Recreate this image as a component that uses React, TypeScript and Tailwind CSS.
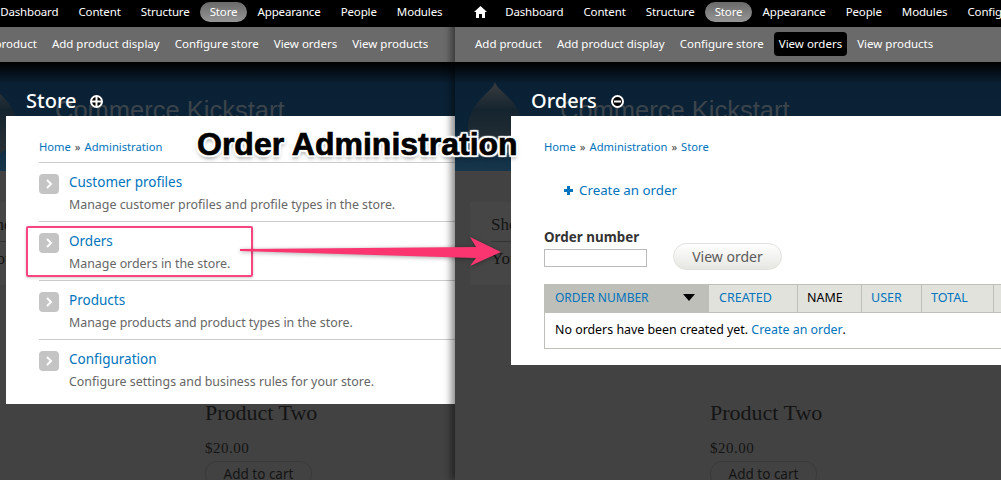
import React from "react";

const sans = "font-['Noto_Sans','DejaVu_Sans',sans-serif]";
const link = "text-[#0074bd]";

function Chevron() {
  return (
    <span className="flex h-5 w-5 shrink-0 items-center justify-center rounded-[4px] bg-[#c4c4c4]">
      <svg width="8" height="12" viewBox="0 0 8 12" fill="none">
        <path d="M2 2l4 4-4 4" stroke="#fff" strokeWidth="2" />
      </svg>
    </span>
  );
}

function Nav({ viewActive }: { viewActive?: boolean }) {
  const main = ["Dashboard", "Content", "Structure", "Store", "Appearance", "People", "Modules", "Configuration"];
  const sub = ["Add product", "Add product display", "Configure store", "View orders", "View products"];
  return (
    <>
      <div className="flex h-[27px] items-center gap-[0.15px] bg-black pb-[3px] pl-[19px] text-[11.5px] tracking-[-0.15px] text-white">
        <svg width="13" height="12" viewBox="0 0 13 12" fill="#fff" className="mr-[8px] shrink-0">
          <path d="M6.5 0L0 6h2v6h3V8h3v4h3V6h2z" />
        </svg>
        {main.map((m) => (
          <span
            key={m}
            className={
              m === "Store"
                ? "rounded-[10px] bg-gradient-to-b from-[#6a6a6a] to-[#969696] px-[10px] py-[2px] leading-[16px] whitespace-nowrap"
                : "px-[10px] whitespace-nowrap"
            }
          >
            {m}
          </span>
        ))}
      </div>
      <div className="flex h-[35px] items-center gap-[5px] bg-[#6a6a6a] pb-[1px] pl-[15px] text-[11.5px] text-white">
        {sub.map((s) => (
          <span
            key={s}
            className={
              viewActive && s === "View orders"
                ? "rounded-[4px] bg-black px-[5px] py-[4px] leading-[16px] whitespace-nowrap"
                : "px-[5px] py-[4px] leading-[16px] whitespace-nowrap"
            }
          >
            {s}
          </span>
        ))}
      </div>
    </>
  );
}

function Backdrop() {
  return (
    <>
      <div className="relative h-[109px] overflow-hidden bg-[linear-gradient(#000_0,#0a2135_22px,#0b2337_60%,#16364c_100%)]">
        <svg width="58" height="90" viewBox="0 0 58 90" className="absolute top-[20px] left-[11px]">
          <defs>
            <linearGradient id="drop" x1="0" y1="0" x2="0" y2="1">
              <stop offset="0" stopColor="#3a3c3f" />
              <stop offset="0.38" stopColor="#14242f" />
              <stop offset="1" stopColor="#2a3035" />
            </linearGradient>
          </defs>
          <path d="M29 0c2 10 27 18 27 46a27 27 0 0 1-54 0C2 20 27 10 29 0z" fill="url(#drop)" />
        </svg>
        <span className="absolute top-[33px] left-[105px] font-['Liberation_Sans',sans-serif] text-[25.5px] leading-[30px] whitespace-nowrap text-[#3c444b]">
          Commerce Kickstart
        </span>
      </div>
      <div className="flex h-[309px] bg-[#424242] font-['Liberation_Serif',serif] text-[#141414]">
        <div className="mt-[31px] ml-[15px] h-[83px] w-[100px] bg-[#464646] pt-[13px] pl-[21px] text-[17px]">
          <div className="border-b border-[#333] pb-[6px] leading-[20px]">Shopping</div>
          <div className="pt-[7px] leading-[20px]">Your</div>
        </div>
        <div className="ml-[140px] pt-[230px]">
          <div className="text-[22px] leading-[24px] whitespace-nowrap">Product Two</div>
          <div className="mt-[14px] text-[15px] leading-[18px] tracking-[0.5px]">$20.00</div>
          <div className={`mt-[4px] w-[107px] rounded-[12px] border border-[#3a3a3a] text-center text-[13.5px] leading-[24px] whitespace-nowrap ${sans}`}>
            Add to cart
          </div>
        </div>
      </div>
    </>
  );
}

function Title({ text, minus }: { text: string; minus?: boolean }) {
  return (
    <div className="absolute top-[87px] left-[76px] flex items-center">
      <span className="text-[20px] leading-[28px] font-medium text-white">{text}</span>
      <span className="ml-[14px] flex h-[13px] w-[13px] items-center justify-center rounded-full border-2 border-white bg-black">
        <svg width="9" height="9" viewBox="0 0 9 9" fill="#fff">
          {minus ? <rect y="3.500" x="1" width="7" height="2" /> : <path d="M3.500 0h2v3.500H9v2H5.500V9h-2V5.500H0v-2h3.500z" />}
        </svg>
      </span>
    </div>
  );
}

function Crumbs({ items }: { items: string[] }) {
  return (
    <div className="flex h-[46px] items-start pt-[23px] text-[11.2px] leading-[16px]">
      {items.map((c, i) => (
        <span key={c} className="whitespace-nowrap">
          {i > 0 && <span className="mx-[4px] text-[#444]">»</span>}
          <span className={link}>{c}</span>
        </span>
      ))}
    </div>
  );
}

const rows = [
  ["Customer profiles", "Manage customer profiles and profile types in the store."],
  ["Orders", "Manage orders in the store."],
  ["Products", "Manage products and product types in the store."],
  ["Configuration", "Configure settings and business rules for your store."],
];

function LeftCard() {
  return (
    <div className="absolute top-[116px] left-[56px] h-[288px] w-[500px] bg-white pl-[33px]">
      <Crumbs items={["Home", "Administration"]} />
      {rows.map(([t, d]) => (
        <div key={t} className="flex h-[59px] gap-[10px] border-t border-[#ccc] pt-[11px]">
          <Chevron />
          <div className="-mt-[1px]">
            <div className={`${link} text-[13.5px] leading-[18px]`}>{t}</div>
            <div className="mt-[5px] text-[12.4px] leading-[18px] text-[#666]">{d}</div>
          </div>
        </div>
      ))}
    </div>
  );
}

function RightCard() {
  const cols: [string, number, string][] = [
    ["CREATED", 88, link],
    ["NAME", 64, "text-black"],
    ["USER", 60, link],
    ["TOTAL", 72, link],
    ["", 60, link],
  ];
  return (
    <div className="absolute top-[116px] left-[56px] h-[249px] w-[500px] bg-white pl-[33px]">
      <Crumbs items={["Home", "Administration", "Store"]} />
      <div className={`mt-[18px] ml-[20px] flex items-center gap-[6px] text-[13.3px] leading-[20px] ${link}`}>
        <svg width="9" height="9" viewBox="0 0 9 9" fill="#0074bd">
          <path d="M3 0h3v3h3v3H6v3H3V6H0V3h3z" />
        </svg>
        Create an order
      </div>
      <div className="mt-[28px] flex items-end">
        <div>
          <div className="text-[13.4px] leading-[18px] font-bold text-[#333]">Order number</div>
          <div className="mt-[3px] h-[18px] w-[103px] border border-[#bbb] bg-white" />
        </div>
        <div className="-mb-[3px] ml-[26px] flex h-[27px] w-[109px] items-center justify-center rounded-[14px] border border-[#e0e0dc] bg-gradient-to-b from-white to-[#e6e6e2] text-[14px] text-[#5a5a5a]">
          View order
        </div>
      </div>
      <div className="mt-[17px] w-[520px] border border-[#bebfb9] text-[12.5px]">
        <div className="flex h-[27px] items-center bg-[#e1e2dc] leading-[25px]">
          <div className={`flex h-full w-[164px] shrink-0 items-center justify-between bg-[#bebfb9] pr-[14px] pb-[2px] pl-[10px] text-[12px] ${link}`}>
            ORDER NUMBER
            <svg width="12" height="7" viewBox="0 0 12 7" fill="#000">
              <path d="M0 0h12L6 7z" />
            </svg>
          </div>
          {cols.map(([c, w, color], i) => (
            <div
              key={i}
              style={{ width: w }}
              className={`h-full shrink-0 ${color} ${i === 0 ? "pl-[10px]" : "border-l border-[#bebfb9] pl-[9px]"}`}
            >
              {c}
            </div>
          ))}
        </div>
        <div className="flex h-[36px] items-center border-t border-[#bebfb9] pb-[1px] pl-[10px] text-[12.4px] text-black">
          No orders have been created yet.&nbsp;<span className={link}>Create an order</span>.
        </div>
      </div>
    </div>
  );
}

function Overlay() {
  return (
    <>
      <div className="absolute top-[226px] left-[26px] h-[51px] w-[227px] rounded-[2px] border-2 border-[#f8457f] shadow-[0_1px_3px_rgba(0,0,0,0.2)]" />
      <svg width="280" height="50" viewBox="0 0 280 50" className="absolute top-[228px] left-[235px]">
        <path
          d="M5 21L241 19L235 9L266 24L235 38L241 30L5 23z"
          fill="#fb3570"
          style={{ filter: "drop-shadow(0 1px 2px rgba(0,0,0,.35))" }}
        />
      </svg>
      <div className="absolute top-[125px] left-[197px] font-['Liberation_Sans',sans-serif] text-[32px] leading-[38px] font-bold whitespace-nowrap text-black [-webkit-text-stroke:0.7px_#000] [text-shadow:2px_0_1px_#fff,-2px_0_1px_#fff,0_2px_1px_#fff,0_-2px_1px_#fff,2px_2px_1px_#fff,-2px_-2px_1px_#fff,2px_-2px_1px_#fff,-2px_2px_1px_#fff,0_3px_4px_rgba(0,0,0,0.5)]">
        Order Administration
      </div>
    </>
  );
}

export default function App() {
  return (
    <div className={`relative flex h-[480px] w-[1001px] overflow-hidden bg-[#424242] ${sans}`}>
      <div className="h-full w-[455px] shrink-0 overflow-hidden">
        <div className="relative -ml-[50px] h-[480px] w-[505px]">
          <Nav />
          <Backdrop />
          <Title text="Store" />
          <LeftCard />
        </div>
      </div>
      <div className="relative z-10 h-full w-[546px] shrink-0 overflow-hidden shadow-[-4px_0_7px_rgba(0,0,0,0.45)]">
        <div className="relative h-[480px] w-[546px]">
          <Nav viewActive />
          <Backdrop />
          <Title text="Orders" minus />
          <RightCard />
        </div>
      </div>
      <div className="absolute inset-0 z-20">
        <Overlay />
      </div>
    </div>
  );
}
